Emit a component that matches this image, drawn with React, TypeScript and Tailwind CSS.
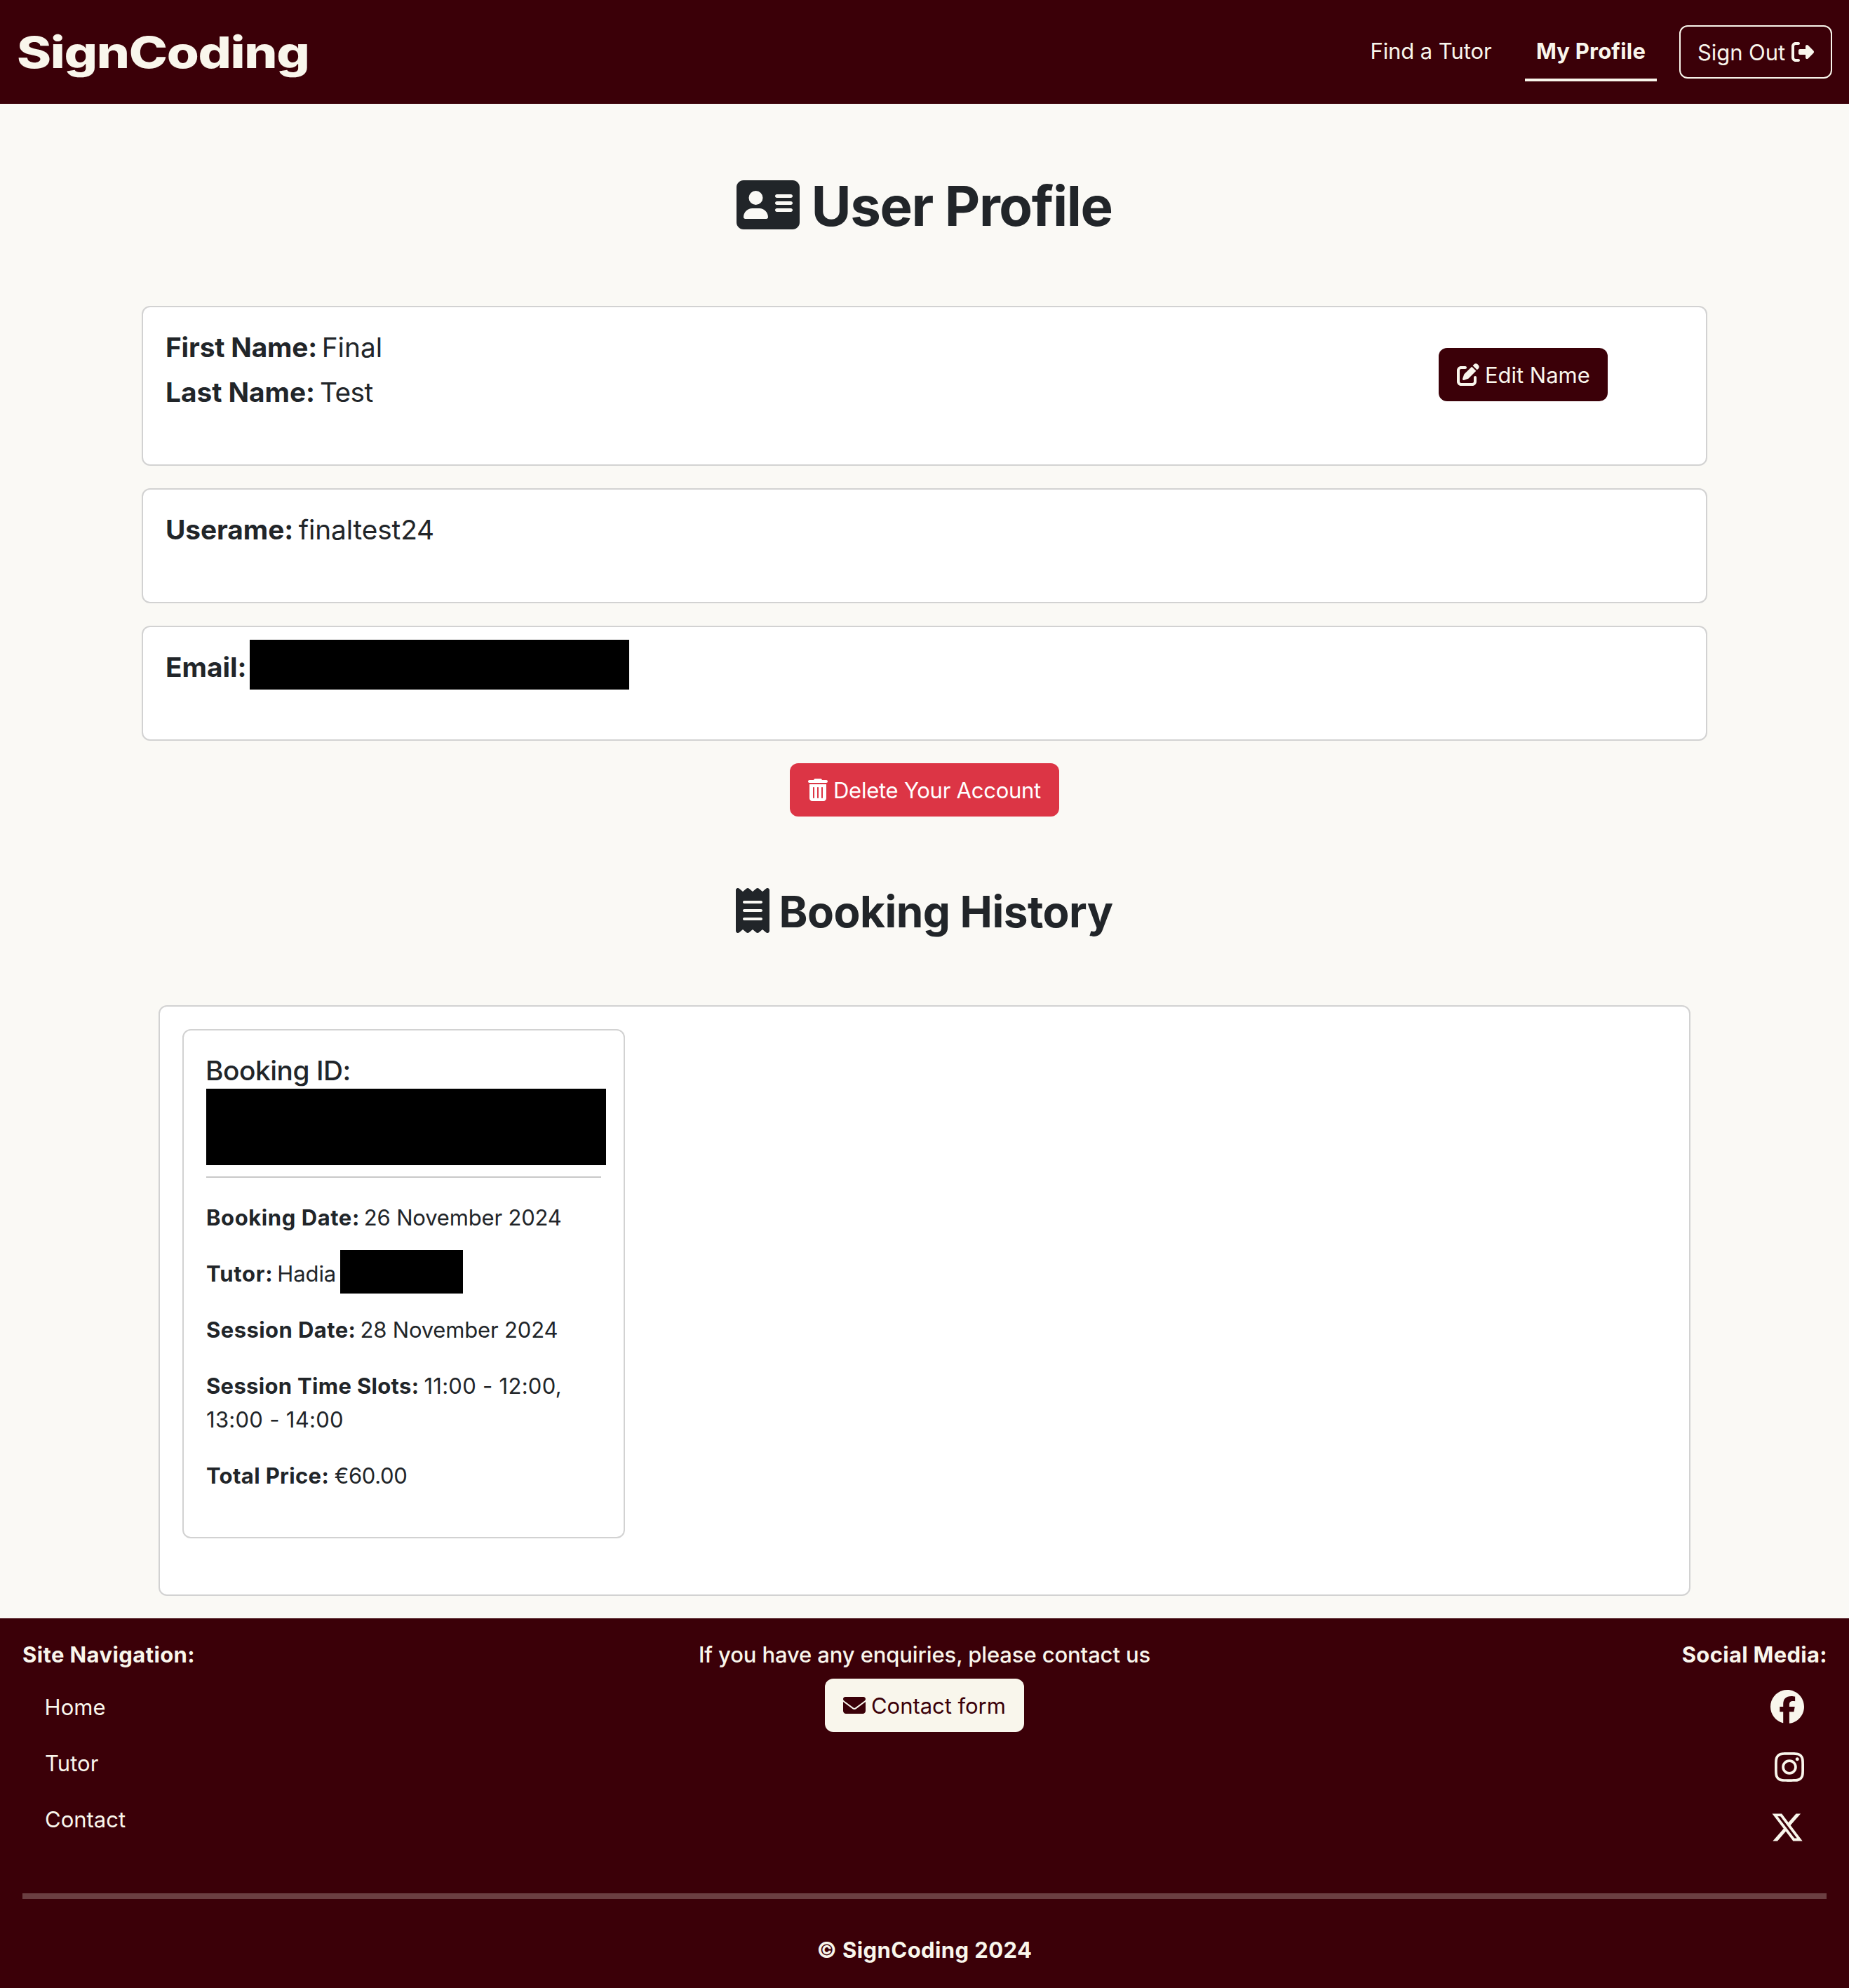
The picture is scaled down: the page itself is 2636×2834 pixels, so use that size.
import React from 'react';
import {
  FaAddressCard,
  FaEnvelope,
  FaFacebook,
  FaInstagram,
  FaPenToSquare,
  FaReceipt,
  FaRightFromBracket,
  FaTrashCan,
  FaXTwitter,
} from 'react-icons/fa6';

function Header() {
  return (
    <header className="flex h-[148px] items-center justify-between bg-[#3b0008] pl-6 pr-6 text-[#f9f6ec]">
      <a className="block origin-left scale-x-[1.2] pt-[2px] text-[62px] font-[780] leading-[100px] tracking-[-1.1px]">SignCoding</a>
      <nav className="flex items-center gap-8">
        <a className="h-[84px] w-[205px] whitespace-nowrap border-b-4 border-transparent pl-[16.5px] pt-[17px] leading-[48px] tracking-[-0.094px]">Find a Tutor</a>
        <a className="h-[84px] w-[188px] whitespace-nowrap border-b-4 border-[#f9f6ec] pt-[17px] text-center font-bold leading-[48px] tracking-[0.215px]">My Profile</a>
        <a className="flex h-[76px] w-[218px] items-center gap-[9px] whitespace-nowrap rounded-xl border-2 border-[#f9f6ec] pl-6">
          <span className="pt-0.5 leading-[48px] tracking-[-0.068px]">Sign Out</span>
          <FaRightFromBracket className="size-8 shrink-0" />
        </a>
      </nav>
    </header>
  );
}

function Profile() {
  return (
    <section className="mx-[202px] flex flex-col gap-8">
      <div className="flex h-[228px] justify-between rounded-xl border-2 border-[#d2d2d2] bg-white pl-8 text-[38.8px] leading-[48px]">
        <div className="flex flex-col gap-4 pt-[33px]">
          <p>
            <strong className="font-bold tracking-[-0.15px]">First Name:</strong>
            <span className="ml-[6.5px] tracking-[0.02px]">Final</span>
          </p>
          <p>
            <strong className="font-bold tracking-[-0.02px]">Last Name:</strong>
            <span className="ml-[7px] tracking-[-0.537px]">Test</span>
          </p>
        </div>
        <button className="mr-[140px] mt-[58px] flex h-[76px] w-[241px] items-center gap-2 whitespace-nowrap rounded-xl bg-[#3b0008] pl-[26px] text-[31px] text-[#f9f6ec]">
          <FaPenToSquare className="size-8 shrink-0" />
          <span className="pt-0.5 tracking-[-0.025px]">Edit Name</span>
        </button>
      </div>
      <div className="h-[164px] rounded-xl border-2 border-[#d2d2d2] bg-white pl-8 pt-[33px] text-[38.8px] leading-[48px]">
        <strong className="font-bold tracking-[-0.04px]">Userame:</strong>
        <span className="ml-[7.5px] tracking-[-0.118px]">finaltest24</span>
      </div>
      <div className="flex h-[164px] rounded-xl border-2 border-[#d2d2d2] bg-white pl-8 pt-[33px] text-[38.8px] leading-[48px]">
        <strong className="w-[120px] font-bold">Email:</strong>
        <span className="-mt-[15px] h-[71px] w-[541px] bg-black" />
      </div>
      <button className="flex h-[76px] w-[384px] items-center gap-2 self-center whitespace-nowrap rounded-xl bg-[#dc3545] pl-[26px] text-white">
        <FaTrashCan className="h-8 w-7 shrink-0" />
        <span className="pt-0.5 tracking-[-0.254px]">Delete Your Account</span>
      </button>
    </section>
  );
}

function Bookings() {
  return (
    <section className="mx-[226px] h-[842px] rounded-xl border-2 border-[#d2d2d2] bg-white p-8">
      <article className="h-[726px] w-[631px] rounded-xl border-2 border-[#d2d2d2] px-8 pt-[33px] leading-[48px]">
        <h3 className="-ml-px text-[38.8px] font-medium tracking-[-0.45px]">Booking ID:</h3>
        <div className="-mr-[7px] mt-[2px] h-[109px] bg-black" />
        <hr className="mb-[33px] mt-4 border-t-2 border-[#c8c8c8]" />
        <div className="flex flex-col gap-8">
          <p>
            <strong className="font-bold tracking-[0.57px]">Booking Date:</strong>
            <span className="ml-[6px] tracking-[-0.171px]">26 November 2024</span>
          </p>
          <p className="flex h-12">
            <strong className="font-bold tracking-[0.75px]">Tutor:</strong>
            <span className="ml-[6px] tracking-[-0.1px]">Hadia</span>
            <span className="-mt-[10px] ml-[6px] h-[62px] w-[175px] bg-black" />
          </p>
          <p>
            <strong className="font-bold tracking-[0.43px]">Session Date:</strong>
            <span className="ml-[6px] tracking-[-0.168px]">28 November 2024</span>
          </p>
          <p>
            <strong className="font-bold tracking-[0.32px]">Session Time Slots:</strong>
            <span className="ml-[7px] tracking-[0.28px]">
              11:00 - 12:00,
              <br />
              13:00 - 14:00
            </span>
          </p>
          <p>
            <strong className="font-bold tracking-[0.35px]">Total Price:</strong>
            <span className="ml-[7.5px] tracking-[-0.351px]">€60.00</span>
          </p>
        </div>
      </article>
    </section>
  );
}

function Footer() {
  return (
    <footer className="mt-8 h-[527px] bg-[#3b0008] px-8 pt-8 text-[#f9f6ec]">
      <div className="grid h-[360px] grid-cols-3">
        <div>
          <h4 className="font-bold leading-[40px] tracking-[0.4px]">Site Navigation:</h4>
          <ul className="mt-[31px] flex flex-col gap-8 pl-8 leading-[48px]">
            <li className="-ml-[0.5px] tracking-[0.1px]">Home</li>
            <li className="tracking-[0.054px]">Tutor</li>
            <li className="tracking-[0.007px]">Contact</li>
          </ul>
        </div>
        <div className="flex flex-col items-center">
          <h4 className="whitespace-nowrap font-medium leading-[40px] tracking-[-0.121px]">If you have any enquiries, please contact us</h4>
          <button className="mt-[14px] flex h-[76px] w-[284px] items-center gap-2 whitespace-nowrap rounded-xl bg-[#f9f6ec] pl-[26px] text-[#3b0008]">
            <FaEnvelope className="size-8 shrink-0" />
            <span className="pt-0.5 tracking-[-0.039px]">Contact form</span>
          </button>
        </div>
        <div className="flex flex-col items-end">
          <h4 className="-mr-px font-bold leading-[40px] tracking-[0.302px]">Social Media:</h4>
          <div className="mt-[30px] flex flex-col items-end gap-[38px] pr-8">
            <FaFacebook className="size-12" />
            <FaInstagram className="h-12 w-[42px]" />
            <FaXTwitter className="size-12" />
          </div>
        </div>
      </div>
      <hr className="border-t-8 border-[#6b3e41]" />
      <p className="mt-[48px] text-center font-bold leading-[50px] tracking-[0.409px]">© SignCoding 2024</p>
    </footer>
  );
}

export default function App() {
  return (
    <div className="h-[2834px] w-[2636px] overflow-hidden bg-[#faf9f5] font-['Inter',sans-serif] text-[31px] leading-[48px] text-[#212529]">
      <Header />
      <main>
        <h1 className="my-24 flex h-24 items-center justify-center gap-4 text-[78px] font-bold leading-[96px] tracking-[-1.425px]">
          <FaAddressCard className="h-20 w-[90px]" />
          <span className="pt-[3px]">User Profile</span>
        </h1>
        <Profile />
        <h2 className="my-24 flex h-[77px] items-center justify-center gap-[13px] text-[62px] font-bold leading-[77px] tracking-[-0.505px]">
          <FaReceipt className="mb-px h-16 w-12" />
          <span className="pt-px">Booking History</span>
        </h2>
        <Bookings />
      </main>
      <Footer />
    </div>
  );
}
